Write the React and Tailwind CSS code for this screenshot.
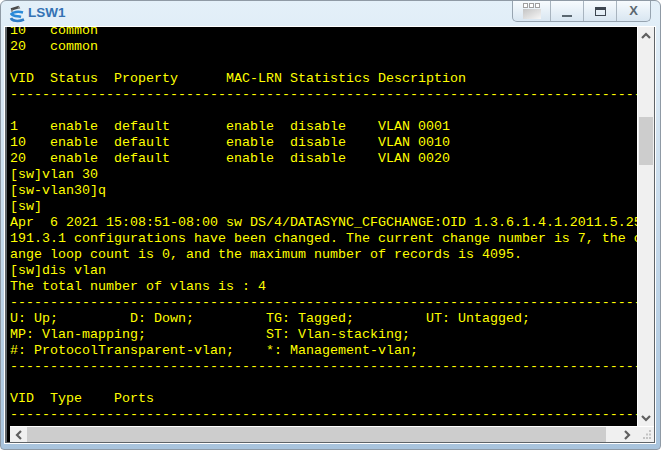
const lines = [
  "10   common",
  "20   common",
  "",
  "VID  Status  Property      MAC-LRN Statistics Description",
  "-".repeat(80),
  "",
  "1    enable  default       enable  disable    VLAN 0001",
  "10   enable  default       enable  disable    VLAN 0010",
  "20   enable  default       enable  disable    VLAN 0020",
  "[sw]vlan 30",
  "[sw-vlan30]q",
  "[sw]",
  "Apr  6 2021 15:08:51-08:00 sw DS/4/DATASYNC_CFGCHANGE:OID 1.3.6.1.4.1.2011.5.25.191.3.1",
  "191.3.1 configurations have been changed. The current change number is 7, the change",
  "ange loop count is 0, and the maximum number of records is 4095.",
  "[sw]dis vlan",
  "The total number of vlans is : 4",
  "-".repeat(80),
  "U: Up;         D: Down;         TG: Tagged;         UT: Untagged;",
  "MP: Vlan-mapping;               ST: Vlan-stacking;",
  "#: ProtocolTransparent-vlan;    *: Management-vlan;",
  "-".repeat(80),
  "",
  "VID  Type    Ports",
  "-".repeat(80),
];

function Chevron({ d }) {
  return (
    <svg width="10" height="10" viewBox="0 0 10 10">
      <path d={d} fill="none" stroke="#5f5f5f" strokeWidth="2.2" />
    </svg>
  );
}

function AppIcon() {
  return (
    <svg width="16" height="19" viewBox="0 0 16 19" className="shrink-0">
      <path d="M2 5.5 L10 3" stroke="#4a4a4a" strokeWidth="2.4" />
      <path d="M2 7 L4 6.5 M9 4 L11 3.5" stroke="#8a8a8a" strokeWidth="2" />
      <path d="M14 8.5 C9 7 4 8 2.5 10 C4 12.5 9 12 12 13" fill="none" stroke="#2a8ad8" strokeWidth="2.6" />
      <path d="M2 14 C3 17 9 18 15 15.5" fill="none" stroke="#2f7cc4" strokeWidth="2.6" />
    </svg>
  );
}

function ResizeGrip() {
  return (
    <svg width="10" height="10" viewBox="0 0 10 10">
      <rect x="7" y="0" width="2" height="2" fill="#c4c4c4" />
      <rect x="4" y="3.500" width="2" height="2" fill="#c4c4c4" />
      <rect x="7" y="3.500" width="2" height="2" fill="#c4c4c4" />
      <rect x="1" y="7" width="2" height="2" fill="#c4c4c4" />
      <rect x="4" y="7" width="2" height="2" fill="#c4c4c4" />
      <rect x="7" y="7" width="2" height="2" fill="#c4c4c4" />
    </svg>
  );
}

export default function App() {
  return (
    <div className="w-[661px] h-[450px] flex flex-col overflow-hidden rounded-t-md rounded-b-sm border border-[#8f9aa5] bg-gradient-to-b from-[#e4f0f9] to-[#a9c4dd]">
      {/* title bar */}
      <div className="h-[25px] shrink-0 flex items-start justify-between pl-[8px] pr-[9px]">
        <div className="flex items-center gap-[3px] h-[25px]">
          <AppIcon />
          <span className="text-[13.5px] font-bold text-[#3472b4] [font-family:'Liberation_Sans',sans-serif]">LSW1</span>
        </div>
        <div className="w-[139px] h-[21px] flex rounded-b-[5px] border border-t-0 border-[#97a4b0] bg-gradient-to-b from-[#f7fbfe] to-[#d9e6f1]">
          <div className="w-[38px] flex items-center justify-center border-r border-[#a8b4bf]">
            <div className="w-[18px] h-[16px] flex flex-col gap-[1px]">
              <div className="flex gap-[1px] h-[5px]">
                <div className="flex-1 border border-[#a0a0a0] bg-white" />
                <div className="flex-1 border border-[#a0a0a0] bg-white" />
                <div className="flex-1 border border-[#a0a0a0] bg-white" />
              </div>
              <div className="flex-1 bg-gradient-to-br from-[#c4c4c4] to-[#f7f7f7]" />
            </div>
          </div>
          <div className="w-[33px] flex items-end justify-center pb-[4px] border-r border-[#a8b4bf]">
            <div className="w-[10px] h-[2px] bg-[#5b6770]" />
          </div>
          <div className="w-[33px] flex items-center justify-center border-r border-[#a8b4bf]">
            <div className="w-[11px] h-[9px] border border-[#3d4650] border-t-[3px]" />
          </div>
          <div className="flex-1 flex items-center justify-center text-[13px] font-bold text-[#5b6770] [font-family:'Liberation_Sans',sans-serif]">X</div>
        </div>
      </div>

      {/* terminal frame */}
      <div className="flex-1 min-h-0 ml-[3px] mr-[4px] mb-[5px] border border-white">
        <div className="h-full border-l-2 border-r border-b border-[#5f6468] bg-black flex flex-col">
          <div className="flex-1 min-h-0 flex">
            <div className="flex-1 min-w-0 overflow-hidden pl-[3px]">
              <div className="-mt-[4px] whitespace-pre text-[13.33px] leading-[16px] text-[#ffff00] [font-family:'Liberation_Mono',monospace]">
                {lines.map((line, i) => (
                  <div key={i} className="h-4">{line}</div>
                ))}
                {/* last row sits almost fully under the scrollbar */}
                <div className="h-4 pt-[2px]">1    common  UT:Eth0/0/1(D)     Eth0/0/2(D)     Eth0/0/3(D)     Eth0/0/4(D)</div>
              </div>
            </div>
            {/* vertical scrollbar */}
            <div className="w-[17px] shrink-0 flex flex-col bg-[#f0f0f0] border-l border-white">
              <div className="h-[17px] flex items-center justify-center">
                <Chevron d="M1 7 L5 3 L9 7" />
              </div>
              <div className="h-[73px]" />
              <div className="h-[48px] mx-[1px] bg-[#cdcdcd]" />
              <div className="flex-1" />
              <div className="h-[17px] flex items-center justify-center">
                <Chevron d="M1 3 L5 7 L9 3" />
              </div>
            </div>
          </div>
          {/* horizontal scrollbar */}
          <div className="h-[16px] shrink-0 flex pl-[3px]">
            <div className="flex-1 flex bg-[#f0f0f0] border-t border-white">
              <div className="w-[17px] flex items-center justify-center">
                <Chevron d="M7 1 L3 5 L7 9" />
              </div>
              <div className="w-[579px] bg-[#cdcdcd]" />
              <div className="flex-1 flex items-center justify-end gap-[10px] pr-[2px]">
                <Chevron d="M3 1 L7 5 L3 9" />
                <ResizeGrip />
              </div>
            </div>
          </div>
        </div>
      </div>
    </div>
  );
}
